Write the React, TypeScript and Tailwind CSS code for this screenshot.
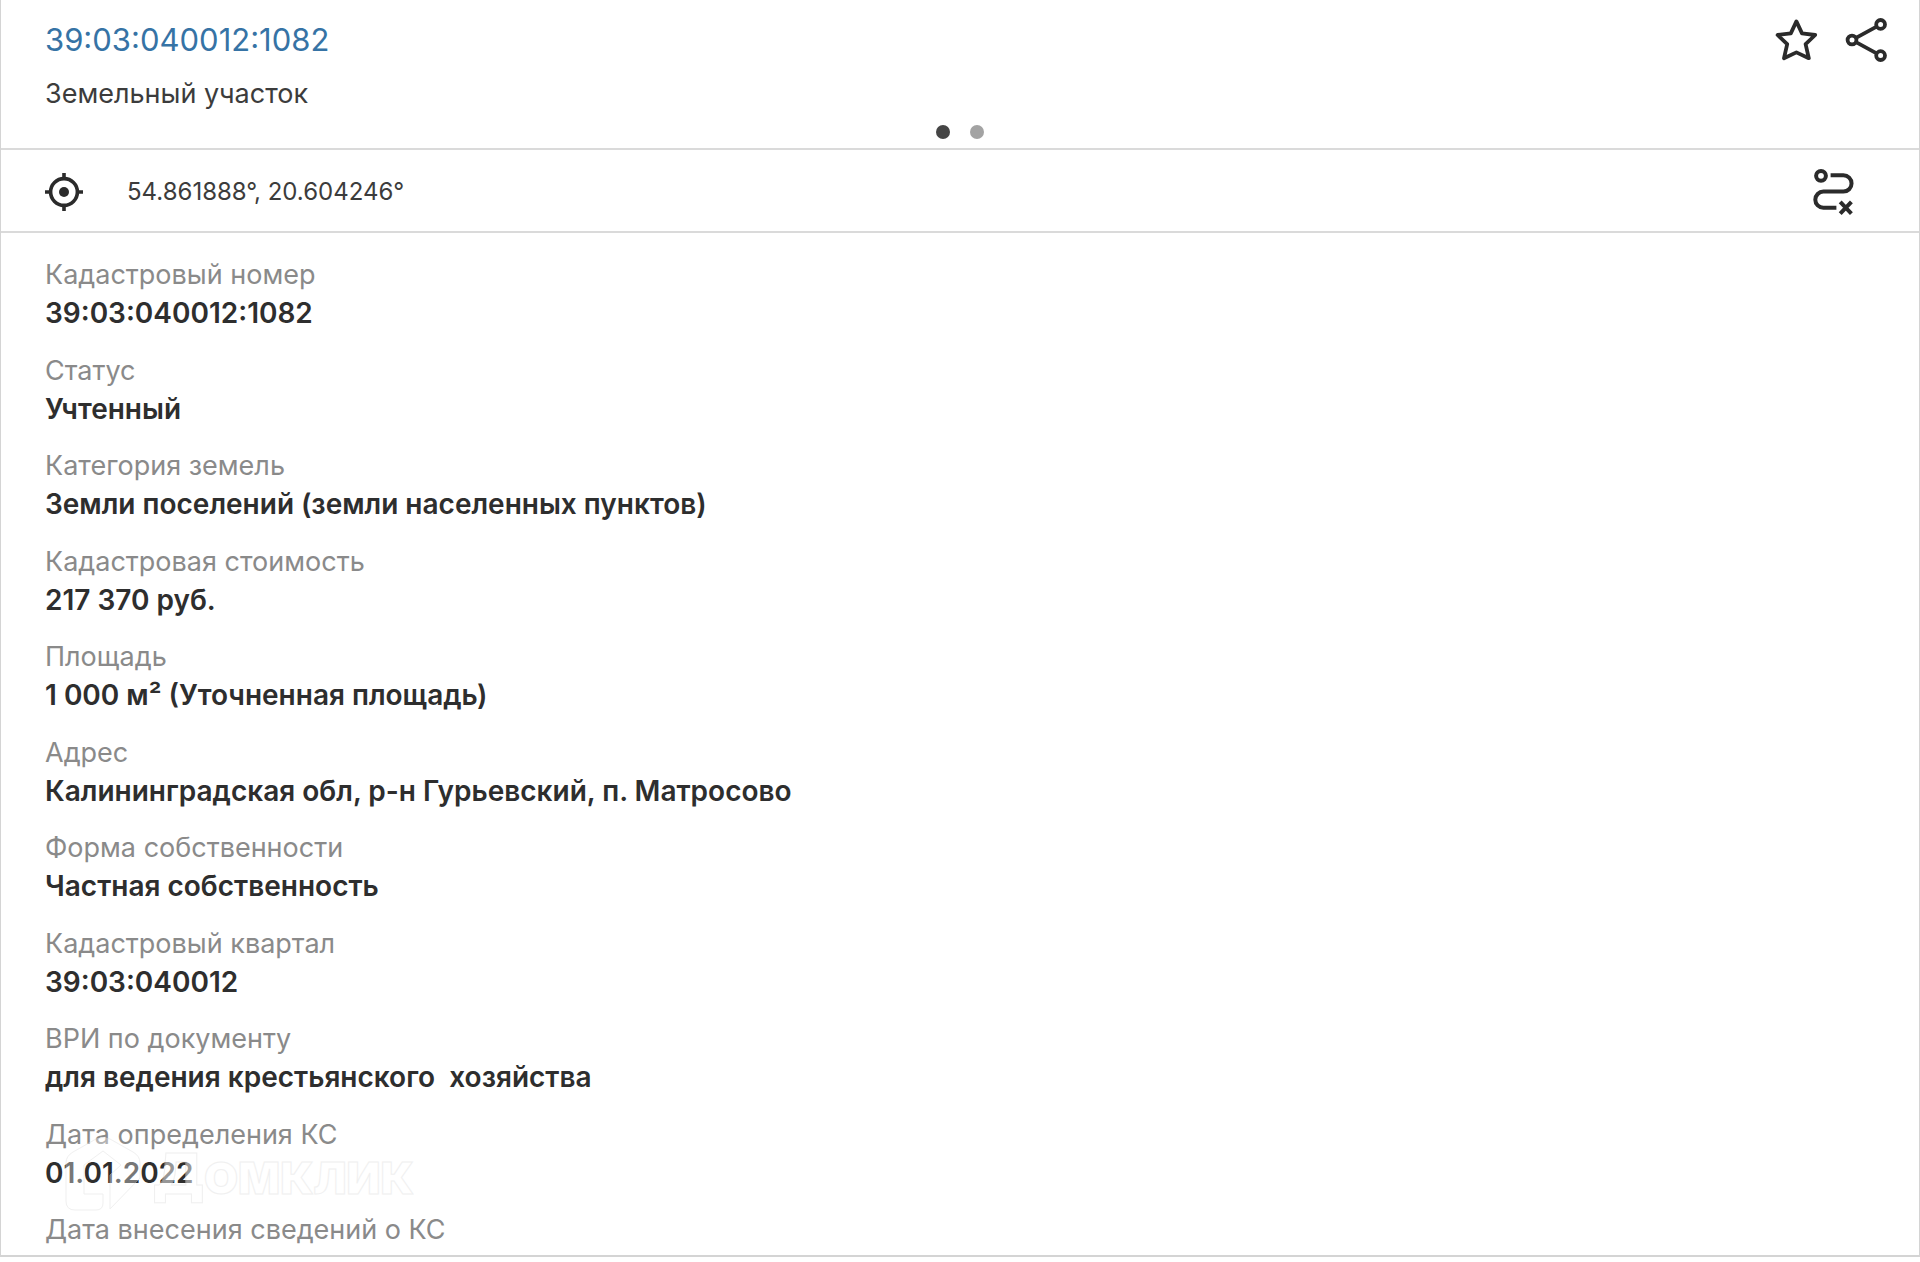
import type { ReactNode } from "react";

type Field = {
  label: string;
  value?: string;
};

const fields: Field[] = [
  { label: "Кадастровый номер", value: "39:03:040012:1082" },
  { label: "Статус", value: "Учтенный" },
  { label: "Категория земель", value: "Земли поселений (земли населенных пунктов)" },
  { label: "Кадастровая стоимость", value: "217 370 руб." },
  { label: "Площадь", value: "1 000 м² (Уточненная площадь)" },
  { label: "Адрес", value: "Калининградская обл, р-н Гурьевский, п. Матросово" },
  { label: "Форма собственности", value: "Частная собственность" },
  { label: "Кадастровый квартал", value: "39:03:040012" },
  { label: "ВРИ по документу", value: "для ведения крестьянского  хозяйства" },
  { label: "Дата определения КС", value: "01.01.2022" },
  { label: "Дата внесения сведений о КС" },
];

function IconButton({ label, children }: { label: string; children: ReactNode }) {
  return (
    <button type="button" aria-label={label} className="block shrink-0 cursor-pointer text-[#2b2b2b]">
      {children}
    </button>
  );
}

function StarIcon() {
  return (
    <svg viewBox="0 0 48 48" className="size-12" fill="none" stroke="currentColor" strokeWidth="3.8" strokeLinejoin="round">
      <path d="M23.4 5.4 L29 17.4 L42.2 19 L32.6 28.2 L35.8 42.2 L23.4 36.4 L11 42.2 L14.2 28.2 L4.6 19 L17.8 17.4 Z" />
    </svg>
  );
}

function ShareIcon() {
  return (
    <svg viewBox="0 0 48 48" className="size-12" fill="none" stroke="currentColor" strokeWidth="3.8">
      <circle cx="9" cy="24" r="4.4" />
      <circle cx="37.6" cy="8.4" r="4.4" />
      <circle cx="37.6" cy="39.6" r="4.4" />
      <path d="M13 21.8 L33.6 10.6 M13 26.2 L33.6 37.4" />
    </svg>
  );
}

function TargetIcon() {
  return (
    <svg viewBox="0 0 38 38" className="size-[38px]" fill="none" stroke="currentColor" strokeWidth="3.6">
      <circle cx="19" cy="19" r="13.4" />
      <circle cx="19" cy="19" r="5" fill="currentColor" stroke="none" />
      <path d="M19 0 V5 M19 33 V38 M0 19 H5 M33 19 H38" />
    </svg>
  );
}

function RouteIcon() {
  return (
    <svg viewBox="0 0 48 48" className="size-12" fill="none" stroke="currentColor" strokeWidth="4">
      <circle cx="12" cy="7.8" r="4.9" />
      <path d="M21.6 7.3 H34.4 A8 8 0 0 1 34.4 23.6 H14.4 A8.1 8.1 0 0 0 14.4 39.8 H27.4" />
      <path d="M31.2 33.8 L42.4 45.6 M42.4 33.8 L31.2 45.6" />
    </svg>
  );
}

function Watermark() {
  return (
    <div className="pointer-events-none absolute bottom-11 left-16 flex items-center gap-3 opacity-50">
      <svg viewBox="0 0 76 74" className="h-[74px] w-[76px]" fill="white" fillOpacity="0.7" stroke="#e2e2e2" strokeWidth="1">
        <path d="M1 26 Q1 19 8 15 L31 2 Q38 -1 45 2 L68 15 Q75 19 75 26 V41 L45 72 V38 L56 28 L38 14 L19 28 V57 H38 V66 Q38 73 31 73 H10 Q1 73 1 64 Z" />
      </svg>
      <span className="text-[44px] leading-none font-black text-white [-webkit-text-stroke:1px_#e2e2e2]">
        <span className="text-[56px]">Д</span>ОМКЛИК
      </span>
    </div>
  );
}

export default function App() {
  return (
    <div className="flex min-h-screen flex-col bg-white pb-[5px] font-['Inter','Liberation_Sans',sans-serif]">
      <main className="relative flex flex-1 flex-col border-x border-b-2 border-[#d4d4d4]">
        <header className="relative flex items-start justify-between border-b-2 border-[#dadada] pt-4 pr-7 pb-8 pl-11">
          <div>
            <h1 className="text-[31px] leading-12">
              <a href="#parcel" className="text-[#3673a5]">39:03:040012:1082</a>
            </h1>
            <p className="mt-2 text-[27px] leading-11 text-[#3c3c3c]">Земельный участок</p>
          </div>
          <div className="flex gap-[22px]">
            <IconButton label="Добавить в избранное">
              <StarIcon />
            </IconButton>
            <IconButton label="Поделиться">
              <ShareIcon />
            </IconButton>
          </div>
          <div className="absolute inset-x-0 bottom-[9px] flex justify-center gap-5">
            <span className="size-3.5 rounded-full bg-[#454545]" />
            <span className="size-3.5 rounded-full bg-[#a3a3a3]" />
          </div>
        </header>

        <div className="flex h-[83px] items-center justify-between border-b-2 border-[#dadada] pt-0.5 pr-[62px] pl-11 text-[#2b2b2b]">
          <div className="flex items-center gap-11">
            <TargetIcon />
            <span className="text-[24px] text-[#3c3c3c]">54.861888°, 20.604246°</span>
          </div>
          <IconButton label="Сбросить маршрут">
            <RouteIcon />
          </IconButton>
        </div>

        <dl className="flex flex-1 flex-col justify-between px-11 pt-[23px] pb-1.5 leading-[38px]">
          {fields.map((field) => (
            <div key={field.label}>
              <dt className="text-[27px] text-[#8a8a8a]">{field.label}</dt>
              {field.value && (
                <dd className="text-[28px] font-semibold whitespace-pre-wrap text-[#2e2e2e]">{field.value}</dd>
              )}
            </div>
          ))}
        </dl>

        <Watermark />
      </main>
    </div>
  );
}
